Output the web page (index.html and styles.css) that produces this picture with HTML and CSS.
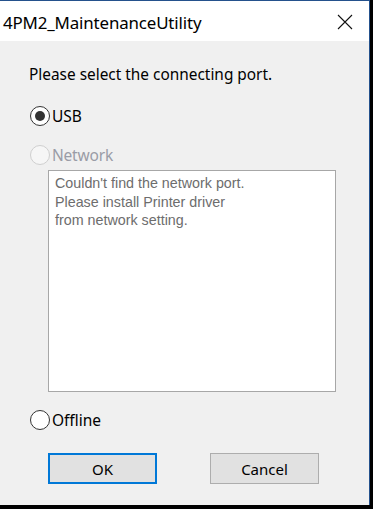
FILE: index.html
```html
<!DOCTYPE html>
<html>
<head>
<meta charset="utf-8">
<link rel="stylesheet" href="styles.css">
</head>
<body>
<div class="window">
  <div class="titlebar">
    <span class="title">4PM2_MaintenanceUtility</span>
    <svg class="close" width="16" height="16" viewBox="0 0 16 16"><path d="M1 1L15 15M15 1L1 15" stroke="#111" stroke-width="1.1" fill="none"/></svg>
  </div>
  <div class="content">
    <div class="prompt">Please select the connecting port.</div>
    <div class="radio radio-usb"><span class="dot checked"></span><span class="label">USB</span></div>
    <div class="radio radio-net disabled"><span class="dot"></span><span class="label">Network</span></div>
    <div class="msgbox">Couldn't find the network port.<br>Please install Printer driver<br>from network setting.</div>
    <div class="radio radio-off"><span class="dot"></span><span class="label">Offline</span></div>
    <div class="buttons">
      <button class="btn btn-ok">OK</button>
      <button class="btn btn-cancel">Cancel</button>
    </div>
  </div>
</div>
</body>
</html>
```
FILE: styles.css
```css
html, body {
  margin: 0;
  padding: 0;
  background: #000;
  width: 373px;
  height: 509px;
  overflow: hidden;
}
.window {
  width: 369px;
  height: 504px;
  border-top: 1px solid #24518c;
  border-right: 1px solid #24518c;
  display: flex;
  flex-direction: column;
  font-family: "Noto Sans", "Open Sans", sans-serif;
  color: #000;
}
.titlebar {
  height: 40px;
  background: #fff;
  display: flex;
  align-items: center;
  justify-content: space-between;
  padding: 0 16px 0 3px;
}
.title {
  font-size: 16.9px;
  letter-spacing: -0.15px;
  margin-top: 2px;
}
.close {
  margin-top: 1px;
}
.content {
  flex: 1;
  background: #f0f0f0;
  padding-top: 24px;
  display: flex;
  flex-direction: column;
}
.prompt {
  margin-left: 29px;
  font-size: 15.4px;
  line-height: 20px;
  height: 20px;
}
.radio {
  display: flex;
  align-items: center;
  height: 20px;
  margin-left: 30px;
  font-size: 15.5px;
}
.radio-usb { margin-top: 21px; }
.radio-net { margin-top: 19px; }
.radio-off { margin-top: 18px; }
.dot {
  box-sizing: border-box;
  width: 20px;
  height: 20px;
  border-radius: 50%;
  border: 1.6px solid #333;
  background: #fff;
  display: flex;
  align-items: center;
  justify-content: center;
  margin-right: 2px;
}
.dot.checked::after {
  content: "";
  width: 10px;
  height: 10px;
  border-radius: 50%;
  background: #333;
}
.disabled .dot {
  border-color: #cfcfcf;
  background: #f6f6f6;
}
.disabled .label {
  color: #9a9ca6;
  letter-spacing: -0.2px;
}
.msgbox {
  box-sizing: border-box;
  margin: 5px 0 0 48px;
  width: 288px;
  height: 222px;
  background: #fff;
  border: 1px solid #a7a7a7;
  padding: 3px 0 0 6px;
  font-family: "Liberation Sans", Arial, sans-serif;
  font-size: 14.3px;
  line-height: 18.5px;
  color: #6d6d6d;
}
.buttons {
  display: flex;
  margin: 23px 0 0 48px;
  gap: 53px;
}
.btn {
  box-sizing: border-box;
  height: 31px;
  background: #e1e1e1;
  border: 1px solid #adadad;
  font-family: "Noto Sans", "Open Sans", sans-serif;
  font-size: 15px;
  color: #000;
  padding: 0;
}
.btn-ok {
  width: 109px;
  border: 2px solid #0078d7;
}
.btn-cancel {
  width: 109px;
}
```
